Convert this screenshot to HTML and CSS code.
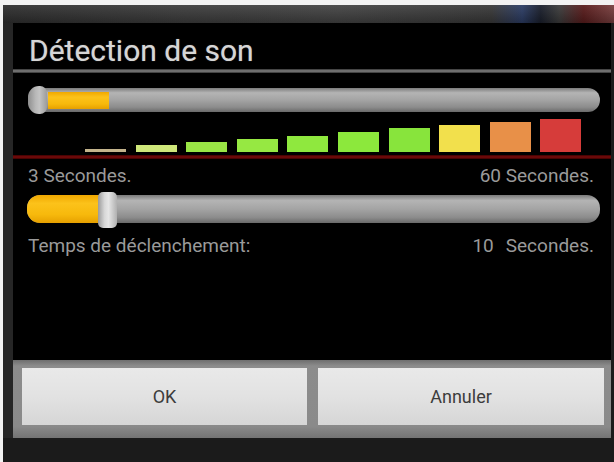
FILE: index.html
```html
<!DOCTYPE html>
<html lang="fr">
<head>
<meta charset="utf-8">
<title>Détection de son</title>
<link rel="stylesheet" href="styles.css">
</head>
<body>
<div class="screen">
  <div class="topband"></div>
  <div class="main">
    <div class="dialog">
      <div class="title">Détection de son</div>
      <div class="divider"></div>
      <div class="content">
        <div class="slider slider-level">
          <div class="track"></div>
          <div class="fill"></div>
          <div class="thumb"></div>
        </div>
        <div class="meter">
          <div class="bar b1"></div>
          <div class="bar b2"></div>
          <div class="bar b3"></div>
          <div class="bar b4"></div>
          <div class="bar b5"></div>
          <div class="bar b6"></div>
          <div class="bar b7"></div>
          <div class="bar b8"></div>
          <div class="bar b9"></div>
          <div class="bar b10"></div>
        </div>
      </div>
      <div class="redline"></div>
      <div class="content">
        <div class="labels labels-range">
          <span>3 Secondes.</span>
          <span>60 Secondes.</span>
        </div>
        <div class="slider slider-time">
          <div class="track"></div>
          <div class="fill"></div>
          <div class="thumb"></div>
        </div>
        <div class="labels labels-value">
          <span>Temps de déclenchement:</span>
          <span><span class="num">10</span><span class="unit">Secondes.</span></span>
        </div>
      </div>
      <div class="buttons">
        <div class="btn">OK</div>
        <div class="btn">Annuler</div>
      </div>
    </div>
  </div>
</div>
</body>
</html>
```
FILE: styles.css
```css
html, body {
  margin: 0;
  padding: 0;
}
body {
  width: 614px;
  height: 462px;
  overflow: hidden;
  background: #f3f3f3;
  font-family: Roboto, "Noto Sans", "DejaVu Sans", sans-serif;
}
.screen {
  margin: 5px 0 0 3px;
  height: 457px;
  background: #1b1b1b;
}
.topband {
  height: 18px;
  background:
    linear-gradient(to bottom, rgba(255,255,255,0.06), rgba(0,0,0,0.25)),
    linear-gradient(to right, #303030 0, #3e3e3e 30%, #454545 55%, #3a3a3a 80%, #2c3d66 85%, #1a1f2c 88%, #3c3c3c 91%, #5a1c1c 95%, #7a4040 100%);
}
.main {
  display: flex;
  padding-left: 10px;
  background: linear-gradient(to right, #262626 0, #262626 10px, #1b1b1b 10px);
}
.dialog {
  width: 598px;
  height: 415px;
  background: #000;
  display: flex;
  flex-direction: column;
}
.title {
  height: 46px;
  box-sizing: border-box;
  padding: 13px 0 0 16px;
  font-size: 30px;
  line-height: 30px;
  color: #d6d6d6;
  text-shadow: 0 0 1px rgba(220,220,220,0.5);
}
.divider {
  height: 4px;
  background: linear-gradient(to bottom, #2e2e2e, #6e6e6e 35%, #6e6e6e 65%, #2e2e2e);
}
.content {
  padding: 0 11px 0 15px;
}
.slider {
  position: relative;
}
.slider .track {
  position: absolute;
  left: 0;
  right: 0;
  background: linear-gradient(to bottom, #7a7a7a 0, #b4b4b4 20%, #a4a4a4 50%, #8c8c8c 80%, #6a6a6a 100%);
}
.slider .fill {
  position: absolute;
  background: linear-gradient(to bottom, #f0a800 0, #fcc21a 30%, #f7b90c 70%, #e6a000 100%);
}
.slider .thumb {
  position: absolute;
  top: 0;
  bottom: 0;
  background: linear-gradient(to right, #9a9a9a 0, #d8d8d8 35%, #e6e6e6 55%, #b0b0b0 100%);
}
.slider-level {
  margin-top: 13px;
  height: 28px;
}
.slider-level .track {
  top: 2px;
  bottom: 2px;
  border-radius: 12px;
}
.slider-level .fill {
  left: 20px;
  width: 61px;
  top: 6px;
  bottom: 5px;
}
.slider-level .thumb {
  left: 0;
  width: 19px;
  border-radius: 11px 7px 7px 11px;
  background: linear-gradient(to right, #8e8e8e 0, #b8b8b8 40%, #c4c4c4 60%, #9c9c9c 100%);
}
.meter {
  height: 38px;
  display: flex;
  align-items: flex-end;
  gap: 9.6px;
  padding-left: 57px;
}
.bar {
  width: 41px;
  flex: none;
}
.b1 { height: 3px; background: #c4b48c; }
.b2 { height: 7px; background: #cfe77a; }
.b3 { height: 10px; background: #9ae545; }
.b4 { height: 13px; background: #96e842; }
.b5 { height: 16px; background: #8fe83e; }
.b6 { height: 20px; background: #8ce83c; }
.b7 { height: 24px; background: #88e43c; }
.b8 { height: 27px; background: #f2e04c; }
.b9 { height: 30px; background: #e89048; }
.b10 { height: 33px; background: #d63c3a; }
.redline {
  margin-top: 3px;
  height: 4px;
  background: linear-gradient(to bottom, #3a0000, #7a0c0c 50%, #3a0000);
}
.labels {
  display: flex;
  justify-content: space-between;
  padding-right: 6px;
  font-size: 19px;
  line-height: 22px;
  color: #9a9a9a;
}
.labels-range {
  margin-top: 6px;
}
.labels-value {
  margin-top: 7px;
}
.unit {
  margin-left: 12px;
}
.slider-time {
  margin-top: 5px;
  height: 36px;
}
.slider-time .track {
  left: -1px;
  top: 3px;
  bottom: 5px;
  border-radius: 13px;
}
.slider-time .fill {
  left: -1px;
  width: 72px;
  top: 3px;
  bottom: 5px;
  border-radius: 13px 0 0 13px;
}
.slider-time .thumb {
  left: 70px;
  width: 19px;
  border-radius: 5px;
}
.buttons {
  margin-top: auto;
  height: 78px;
  box-sizing: border-box;
  padding: 8px 7px 13px 9px;
  display: grid;
  grid-template-columns: 285px 286px;
  gap: 11px;
  background: linear-gradient(to bottom, #6e6e6e 0, #8c8c8c 6px, #8a8a8a 85%, #747474 100%);
}
.btn {
  display: flex;
  align-items: center;
  justify-content: center;
  background: linear-gradient(to bottom, #e9e9e9 0, #e2e2e2 50%, #d6d6d6 100%);
  font-size: 18px;
  color: #3c3c3c;
}
```
